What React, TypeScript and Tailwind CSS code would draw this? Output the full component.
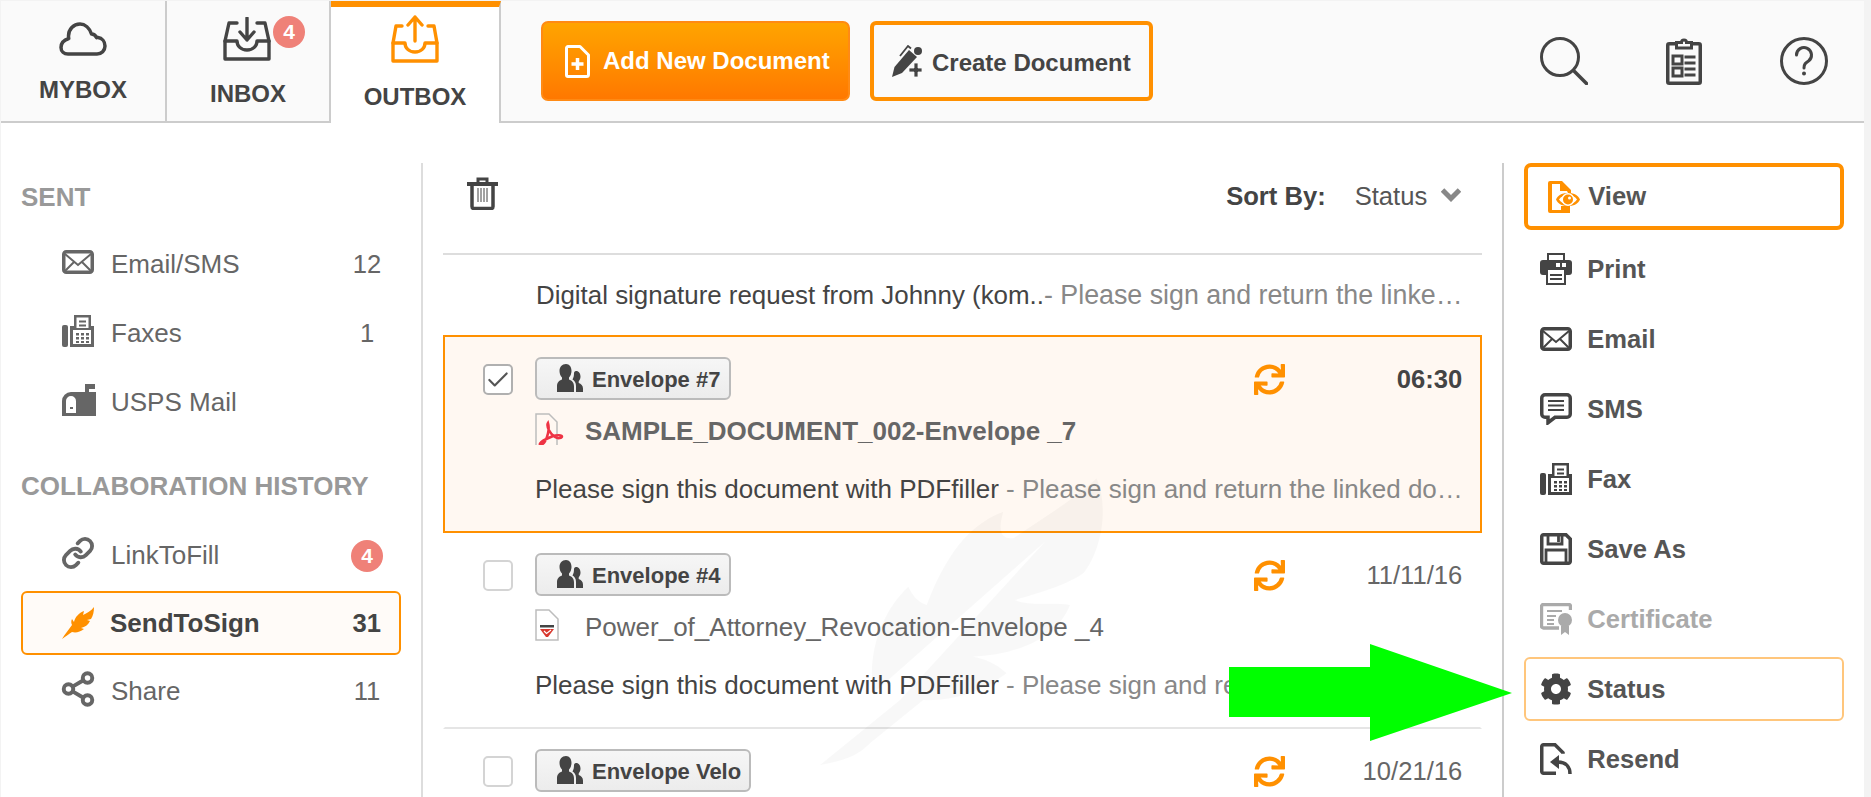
import React from "react";
import { Check, Link, Share2 } from "lucide-react";
import { FaCog, FaSync } from "react-icons/fa";

const DARK = "#444444";
const ORANGE = "#ff9000";

function Cloud() {
  return (
    <svg width="48" height="34" viewBox="0 0 48 34" fill="none" stroke={DARK} strokeWidth="3.5" strokeLinejoin="round">
      <path d="M9 32h29c4.500 0 8-3.500 8-8 0-4.500-3-8-7-8.500-.5 0-1 0-1.500.2-.8-2.200-2.800-3.700-5-3.700C30.500 6 26 2 21 2c-6.500 0-11.500 5.500-11.500 12 0 1 .1 2 .3 2.500C5 18 2 21 2 25.500 2 29.500 5 32 9 32z" />
    </svg>
  );
}

function Tray({ up, color }: { up?: boolean; color: string }) {
  return (
    <svg width="48" height={up ? 48 : 44} viewBox={up ? "0 0 48 48" : "0 0 48 44"} fill="none" stroke={color} strokeWidth="3.400" strokeLinejoin="round" strokeLinecap="round">
      {up ? (
        <g>
          <path d="M2 28h12c0 5 4 9 10 9s10-4 10-9h12v18H2z" />
          <path d="M2 28l3-17h6M46 28l-3-17h-6" />
          <path d="M24 2v24M17 10l7-8 7 8" />
        </g>
      ) : (
        <g>
          <path d="M2 24h12c0 5 4 9 10 9s10-4 10-9h12v18H2z" />
          <path d="M2 24l4-18h8M46 24l-4-18h-8" />
          <path d="M24 1v22M17 15l7 8 7-8" />
        </g>
      )}
    </svg>
  );
}

function SearchIcon() {
  return (
    <svg width="48" height="48" viewBox="0 0 48 48" fill="none" stroke={DARK} strokeLinecap="round">
      <circle cx="20" cy="20" r="18.500" strokeWidth="3" />
      <path d="M33.500 33.500l13 13" strokeWidth="3.500" />
    </svg>
  );
}

function HelpIcon() {
  return (
    <svg width="48" height="48" viewBox="0 0 48 48" fill="none" stroke={DARK}>
      <circle cx="24" cy="24" r="22.500" strokeWidth="3" />
      <path d="M16.500 18a7.500 7.500 0 1 1 12 6c-3 2-4.500 3-4.500 7" strokeWidth="3" strokeLinecap="round" />
      <circle cx="24" cy="36.500" r="2" fill={DARK} stroke="none" />
    </svg>
  );
}

function ClipboardIcon() {
  return (
    <svg width="36" height="48" viewBox="0 0 36 48" fill="none" stroke={DARK}>
      <rect x="1.750" y="6.750" width="32.500" height="39.500" rx="1.500" strokeWidth="3.500" />
      <path d="M10.500 11V5.500h5a2.500 2.500 0 0 1 5 0h5V11z" strokeWidth="3" fill="#fafafa" />
      <rect x="7" y="19" width="9" height="8" strokeWidth="3" />
      <rect x="7" y="31" width="9" height="8" strokeWidth="3" />
      <path d="M18.500 20h11M18.500 26h11M18.500 32h11M18.500 38h11" strokeWidth="3.200" />
    </svg>
  );
}

function AddDocIcon() {
  return (
    <svg width="25" height="33" viewBox="0 0 25 33" fill="none" stroke="#fff" strokeWidth="3" strokeLinejoin="round">
      <path d="M3 1.500h12l8.500 8.500v19.500a2 2 0 0 1-2 2H3a1.500 1.500 0 0 1-1.500-1.500V3A1.500 1.500 0 0 1 3 1.500z" />
      <path d="M12.500 13v12M6.500 19h12" strokeWidth="3.500" />
    </svg>
  );
}

function PenPlusIcon() {
  return (
    <svg width="30" height="32" viewBox="0 0 30 32" fill={DARK}>
      <path d="M0 32l2.500-10L17 5l8 7-15 16z" />
      <path d="M8 11l8-10 3 2.500" fill="none" stroke={DARK} strokeWidth="1.800" />
      <circle cx="26" cy="6" r="4" />
      <path d="M22 18h4v5h4v4h-4v5h-4v-5h-5v-4h5z" stroke="#fafafa" strokeWidth="0.800" />
    </svg>
  );
}

function MailIcon({ color = DARK }: { color?: string }) {
  return (
    <svg width="32" height="24" viewBox="0 0 32 24" fill="none" stroke={color}>
      <rect x="1.750" y="1.750" width="28.500" height="20.500" rx="2.500" strokeWidth="3.500" />
      <path d="M3 4l13 11L29 4M3 21l9.500-9.500M29 21l-9.500-9.500" strokeWidth="2" />
    </svg>
  );
}

function FaxIcon({ color = DARK }: { color?: string }) {
  return (
    <svg width="32" height="32" viewBox="0 0 32 32" fill={color}>
      <rect x="0" y="10" width="6" height="22" rx="2" />
      <path d="M8 11h4V0h17v11h3v21H8zM14.500 2.500V13h12V2.500zM11 15v14h18V15z" fillRule="evenodd" />
      <path d="M17 5.500h7v2h-7zM17 9.500h7v2h-7z" />
      <path d="M14 18h3v2.500h-3zM19 18h3v2.500h-3zM24 18h3v2.500h-3zM14 22h3v2.500h-3zM19 22h3v2.500h-3zM24 22h3v2.500h-3zM14 26h3v2h-3zM19 26h3v2h-3zM24 26h3v2h-3z" />
    </svg>
  );
}

function MailboxIcon() {
  return (
    <svg width="34" height="32" viewBox="0 0 34 32" fill="#666666">
      <path d="M0 32V17a9 9 0 0 1 9-9h14V0h10v5h-6v3h7v24zM4 29h10V17a5 5 0 0 0-10 0z" fillRule="evenodd" />
      <rect x="8" y="23" width="3" height="2" />
    </svg>
  );
}

function FeatherIcon() {
  return (
    <svg width="32" height="32" viewBox="0 0 32 32" fill={ORANGE}>
      <path d="M0 32C3 27 7 22 10 18 9 16 9 14 10 12L12 15C13 10 17 6 22 4L21 8C25 6 29 4 32 0 32 5 31 9 29 12L25 13 28 14C26 18 23 20 19 21L22 22C18 25 14 26 10 25 7 27 4 29 0 32z" />
    </svg>
  );
}

function TrashIcon() {
  return (
    <svg width="31" height="33" viewBox="0 0 31 33" fill="none" stroke={DARK}>
      <path d="M0 7h31" strokeWidth="4" />
      <path d="M11 6V2h9v4" strokeWidth="3" />
      <path d="M5 8v21.500a2 2 0 0 0 2 2h17a2 2 0 0 0 2-2V8" strokeWidth="3.500" />
      <path d="M11 11v14M14 11v14M17 11v14M20 11v14" strokeWidth="1" />
    </svg>
  );
}

function SortChevron() {
  return (
    <svg width="20" height="14" viewBox="0 0 20 14" fill="none" stroke="#888888" strokeWidth="5" className="mt-[11px] ml-[14px]">
      <path d="M1.500 2l8.500 8.500L18.500 2" />
    </svg>
  );
}

function UsersIcon() {
  return (
    <svg width="26" height="29" viewBox="0 0 26 29" fill={DARK}>
      <path d="M9 0c3.500 0 5.500 3 5.500 7 0 2.500-1 5-2.500 6.500v2c3 1 5 3 5 7V28H0v-5.500c0-4 2-6 5-7v-2C3.500 12 2.500 9.500 2.500 7 2.500 3 5 0 9 0z" />
      <path d="M19 7c3 0 4.500 2.500 4.500 5.500 0 2-.7 3.500-1.800 5v1.500c2.300 1 4.300 2.500 4.300 5.500V28h-7v-6c0-3-1.500-5.500-3.500-6.500 1-2 1.500-3.500 1.500-6.500 0-.7.700-2 2-2z" />
    </svg>
  );
}

function PdfIcon() {
  return (
    <svg width="29" height="32" viewBox="0 0 29 32" fill="none">
      <path d="M1 32V1h13l8 8v23" stroke="#bdbdbd" strokeWidth="1.500" />
      <path d="M13 10c-2 3 2 11 7 14 3 2 7 1 7-.5s-5-2-10 0-11 5-12 7 3 1.500 5-2 5-12 3-18.500z" stroke="#ee3344" strokeWidth="2.500" />
    </svg>
  );
}

function SignDocIcon() {
  return (
    <svg width="24" height="32" viewBox="0 0 24 32" fill="none">
      <path d="M1 31V1h13l9 9v21z" stroke="#bdbdbd" strokeWidth="1.500" fill="#fff" />
      <path d="M5 16h14v2.500H5z" fill="#444" />
      <path d="M5 20h14l-6 8h-2z" fill="#d8382e" />
      <path d="M9 22l2.500 2.500L16 21" stroke="#fff" strokeWidth="1.200" />
    </svg>
  );
}

function ViewIcon() {
  return (
    <svg width="32" height="32" viewBox="0 0 32 32" fill={ORANGE}>
      <path d="M2 0h12l9 9v3h-3l-1-2h-7V3H4v26h9v3H2a2 2 0 0 1-2-2V2a2 2 0 0 1 2-2z" />
      <path d="M8 18.500c2-4 5-6.500 12-6.500s10 2.500 12 6.500c-2 4-5 6.500-12 6.500S10 22.500 8 18.500zM11 18.500c2 3 5 4.500 9 4.500s7-1.500 9-4.500c-2-3-5-4.500-9-4.500s-7 1.500-9 4.500z" fillRule="evenodd" />
      <path d="M13 25h9v7h-9z" />
      <circle cx="20" cy="18.500" r="6.500" fill="#fff" />
      <circle cx="20" cy="18.500" r="5" />
      <circle cx="21.500" cy="17" r="1.500" fill="#fff" />
    </svg>
  );
}

function PrintIcon() {
  return (
    <svg width="32" height="32" viewBox="0 0 32 32" fill={DARK}>
      <path d="M7 0h18v9h-2V2H9v7H7z" />
      <rect x="0" y="7" width="32" height="15" rx="3" />
      <rect x="16" y="10" width="4" height="4" fill="#fff" />
      <rect x="22" y="10" width="4" height="4" fill="#fff" />
      <rect x="7" y="16" width="18" height="15" fill="#fff" stroke={DARK} strokeWidth="2" />
      <path d="M10 21h12v2H10zM10 25h12v2H10z" />
    </svg>
  );
}

function SmsIcon() {
  return (
    <svg width="32" height="32" viewBox="0 0 32 32" fill="none" stroke={DARK}>
      <path d="M5 1.750h22a3.250 3.250 0 0 1 3.250 3.250v16a3.250 3.250 0 0 1-3.250 3.250H15l-7 5.500v-5.500H5A3.250 3.250 0 0 1 1.750 21V5A3.250 3.250 0 0 1 5 1.750z" strokeWidth="3.500" />
      <path d="M8 8h16M8 12.500h16M8 17h16" strokeWidth="2.200" />
    </svg>
  );
}

function SaveIcon() {
  return (
    <svg width="32" height="32" viewBox="0 0 32 32" fill="none" stroke={DARK} strokeWidth="3.500">
      <path d="M3.500 1.750H26l4.250 4.250v22.500a1.750 1.750 0 0 1-1.750 1.750H3.500a1.750 1.750 0 0 1-1.750-1.750v-25a1.750 1.750 0 0 1 1.750-1.750z" />
      <path d="M8 2v9h14V2M18.500 3v6" strokeWidth="2.800" />
      <path d="M6 30V17h20v13" strokeWidth="2.800" />
    </svg>
  );
}

function CertIcon() {
  return (
    <svg width="32" height="32" viewBox="0 0 32 32" fill="none" stroke="#aaaaaa">
      <path d="M19 25H3.500a2 2 0 0 1-2-2V3.500a2 2 0 0 1 2-2h25a2 2 0 0 1 2 2V7" strokeWidth="3.400" />
      <path d="M7 8h15M7 13h9M7 17h7M7 21h7" strokeWidth="2.200" />
      <circle cx="25" cy="17" r="7" fill="#aaaaaa" stroke="none" />
      <path d="M21 23v9l4-3 4 3v-9z" fill="#aaaaaa" stroke="none" />
    </svg>
  );
}

function ResendIcon() {
  return (
    <svg width="32" height="32" viewBox="0 0 32 32" fill="none" stroke={DARK} strokeWidth="3.500">
      <path d="M16 30.250H3.500a1.750 1.750 0 0 1-1.750-1.750V3.500A1.750 1.750 0 0 1 3.500 1.750H15l8 8v1" />
      <path d="M30 31c0-7-4-12-12-12h-1" />
      <path d="M10 19l9-7v14z" fill={DARK} stroke="none" />
    </svg>
  );
}

function Tab({ label, icon, className, textClass }: { label: string; icon: React.ReactNode; className: string; textClass: string }) {
  return (
    <div className={`relative flex flex-col items-center ${className}`}>
      {icon}
      <span className={`text-[24px] leading-[28px] font-bold text-[#444] ${textClass}`}>{label}</span>
    </div>
  );
}

function SideRow({ icon, label, count }: { icon: React.ReactNode; label: string; count?: string }) {
  return (
    <div className="flex h-[69px] items-center pt-[2px] pr-[13px] pl-[61px] text-[#666]">
      <span className="flex w-[49px] -translate-y-[3px]">{icon}</span>
      <span className="flex-1 text-[26px]">{label}</span>
      {count && <span className="w-[40px] text-center text-[25.6px]">{count}</span>}
    </div>
  );
}

function Envelope({ name, width }: { name: string; width: string }) {
  return (
    <div className={`flex h-[43px] items-center rounded-[6px] border-2 border-[#bbb] bg-gradient-to-b from-[#f6f6f6] to-[#ececec] pl-[20px] text-[22px] font-bold text-[#444] ${width}`}>
      <UsersIcon />
      <span className="ml-[9px] translate-y-px">{name}</span>
    </div>
  );
}

function DocRow({ selected, checked, tag, tagWidth, date, docIcon, doc, message, preview, className }: {
  selected?: boolean;
  checked?: boolean;
  tag: string;
  tagWidth: string;
  date: string;
  docIcon?: React.ReactNode;
  doc?: string;
  message?: string;
  preview?: string;
  className: string;
}) {
  return (
    <div className={`flex border-x-2 pt-[20px] pl-[38px] ${selected ? "border-y-2 border-[#ff9000] bg-[#fff8f2]" : "border-x-transparent"} ${className}`}>
      <div className={`mt-[7px] flex h-[31px] w-[30px] items-center justify-center rounded-[5px] border-2 bg-white ${checked ? "border-[#b0b0b0]" : "border-[#d4d4d4]"}`}>
        {checked && <Check size={28} strokeWidth={2} color="#555" />}
      </div>
      <div className="ml-[22px] flex-1">
        <div className="flex h-[43px] items-center pr-[18px]">
          <Envelope name={tag} width={tagWidth} />
          <FaSync size={31} color={ORANGE} className="mt-[2px] ml-auto" />
          <span className={`mt-[2px] w-[177px] text-right text-[25.6px] ${selected ? "font-bold text-[#444]" : "text-[#666]"}`}>{date}</span>
        </div>
        {doc && (
          <div className="mt-[11px] flex h-[40px] items-center">
            <span className="flex w-[50px] -translate-y-[2px]">{docIcon}</span>
            <span className={`text-[26px] text-[#666] ${selected ? "font-bold" : ""}`}>{doc}</span>
          </div>
        )}
        {message && (
          <div className="mt-[18px] flex h-[40px] items-center whitespace-nowrap text-[26px] text-[#444]">
            {message}
            <span className="text-[#888]">&nbsp;- {preview}</span>
          </div>
        )}
      </div>
    </div>
  );
}

function ActionRow({ icon, label, className = "border-transparent", color = "text-[#555]" }: { icon: React.ReactNode; label: string; className?: string; color?: string }) {
  return (
    <div className={`mt-[6px] flex h-[64px] items-center gap-[15px] rounded-[6px] border-2 pl-[14px] text-[25.6px] font-bold ${color} ${className}`}>
      {icon}
      <span>{label}</span>
    </div>
  );
}

export default function App() {
  return (
    <div className="relative h-[797px] w-[1871px] overflow-hidden bg-[#f3f3f3] pt-px pr-[7px] pl-px font-['Liberation_Sans',sans-serif]">
      {/* top bar */}
      <header className="flex h-[122px] items-start border-b-[2px] border-[#ccc] bg-[#fafafa]">
        <Tab label="MYBOX" icon={<Cloud />} className="h-[120px] w-[166px] border-r-2 border-[#ccc] pt-[21px]" textClass="mt-[20px]" />
        <Tab
          label="INBOX"
          icon={
            <div className="relative -translate-x-px">
              <Tray color={DARK} />
              <span className="absolute -top-px -right-[34px] flex h-[32px] w-[32px] items-center justify-center rounded-full bg-[#ef8178] text-[21px] font-bold text-white">4</span>
            </div>
          }
          className="h-[120px] w-[164px] border-r-2 border-[#ccc] pt-[16px]"
          textClass="mt-[19px]"
        />
        <Tab label="OUTBOX" icon={<Tray up color={ORANGE} />} className="z-10 h-[122px] w-[170px] border-t-[6px] border-r-2 border-t-[#ff9000] border-r-[#ccc] bg-white pt-[8px]" textClass="mt-[20px]" />
        <button className="mt-[20px] ml-[40px] flex h-[80px] w-[309px] items-center rounded-[7px] border-2 border-[#ff8a14] bg-gradient-to-b from-[#ffa400] to-[#ff7800] pl-[22px] text-[24px] font-bold text-white">
          <AddDocIcon />
          <span className="ml-[13px]">Add New Document</span>
        </button>
        <button className="mt-[20px] ml-[20px] flex h-[80px] w-[283px] items-center rounded-[6px] border-4 border-[#ff9000] pl-[18px] text-[24px] font-bold text-[#444]">
          <PenPlusIcon />
          <span className="ml-[10px] translate-y-[2px]">Create Document</span>
        </button>
        <div className="mt-[36px] mr-[36px] ml-auto flex items-start gap-[78px]">
          <SearchIcon />
          <ClipboardIcon />
          <HelpIcon />
        </div>
      </header>

      <main className="flex h-[674px] bg-white pt-[40px]">
        {/* left nav */}
        <aside className="w-[422px] border-r-2 border-[#ddd] pr-[21px]">
          <h3 className="flex h-[66px] items-center pt-[2px] pl-[20px] text-[26px] font-bold text-[#999]">SENT</h3>
          <SideRow icon={<MailIcon color="#666666" />} label="Email/SMS" count="12" />
          <SideRow icon={<FaxIcon color="#666666" />} label="Faxes" count="1" />
          <SideRow icon={<MailboxIcon />} label="USPS Mail" />
          <h3 className="mt-[16px] flex h-[68px] items-center pl-[20px] text-[26px] font-bold text-[#999]">COLLABORATION HISTORY</h3>
          <div className="flex h-[69px] items-center pt-[2px] pr-[17px] pl-[61px] text-[26px] text-[#666]">
            <span className="flex w-[49px] -translate-y-[3px]"><Link size={34} strokeWidth={2.7} className="-ml-px" color="#666666" /></span>
            <span className="flex-1">LinkToFill</span>
            <span className="flex h-[32px] w-[32px] items-center justify-center rounded-full bg-[#ef8178] text-[21px] font-bold text-white">4</span>
          </div>
          <div className="mt-[2px] ml-[20px] flex h-[64px] w-[380px] items-center rounded-[6px] border-2 border-[#ff9000] bg-[#fffbf8] pr-[18px] pl-[39px] text-[25.6px] font-bold text-[#444]">
            <FeatherIcon />
            <span className="ml-[16px] flex-1 text-[26px]">SendToSign</span>
            <span>31</span>
          </div>
          <div className="mt-[1px]">
            <SideRow icon={<Share2 size={38} strokeWidth={2.5} className="-ml-[3px]" color="#666666" />} label="Share" count="11" />
          </div>
        </aside>

        {/* document list */}
        <section className="relative w-[1080px] px-[20px]">
          <div className="flex h-[92px] items-start border-b-2 border-[#ddd] pt-[14px] pr-[21px] pl-[24px] text-[25.6px]">
            <TrashIcon />
            <span className="ml-auto font-bold text-[#444]">Sort By:</span>
            <span className="ml-[29px] text-[#555]">Status</span>
            <SortChevron />
          </div>
          <div className="flex h-[80px] items-center pl-[93px] whitespace-nowrap text-[25.9px] text-[#444]">
            Digital signature request from Johnny (kom..
            <span className="text-[26.8px] text-[#888]">- Please sign and return the linke…</span>
          </div>
          <DocRow
            selected
            checked
            tag="Envelope #7"
            tagWidth="w-[196px]"
            date="06:30"
            docIcon={<PdfIcon />}
            doc="SAMPLE_DOCUMENT_002-Envelope _7"
            message="Please sign this document with PDFfiller"
            preview="Please sign and return the linked do…"
            className="h-[198px]"
          />
          <DocRow
            tag="Envelope #4"
            tagWidth="w-[196px]"
            date="11/11/16"
            docIcon={<SignDocIcon />}
            doc="Power_of_Attorney_Revocation-Envelope _4"
            message="Please sign this document with PDFfiller"
            preview="Please sign and return the linked do…"
            className="h-[196px] border-b-2 border-b-[#e5e5e5]"
          />
          <DocRow tag="Envelope Velo" tagWidth="w-[216px]" date="10/21/16" className="h-[60px]" />
          {/* feather watermark */}
          <svg viewBox="0 0 1140 960" className="pointer-events-none absolute top-[297px] left-[377px] h-[320px] w-[380px]" fill="#000" fillOpacity="0.028">
            <path d="M60 915C150 900 180 880 210 850L370 720C450 725 540 700 620 640 590 610 550 595 520 590 640 585 770 540 810 435 760 425 690 440 645 420 720 400 810 370 850 340 900 280 930 150 890 55 820 120 720 180 640 235 610 235 590 225 610 155 530 185 450 250 380 435 350 425 335 400 325 380 250 450 200 570 220 700L735 245 300 720z" />
          </svg>
        </section>

        {/* actions */}
        <aside className="w-[362px] border-l-2 border-[#ccc] px-[20px]">
          <div className="flex h-[67px] items-center gap-[8px] rounded-[7px] border-4 border-[#ff9000] pl-[20px] text-[25.6px] font-bold text-[#555]">
            <ViewIcon />
            <span>View</span>
          </div>
          <ActionRow icon={<PrintIcon />} label="Print" className="mt-[7px] border-transparent" />
          <ActionRow icon={<MailIcon />} label="Email" />
          <ActionRow icon={<SmsIcon />} label="SMS" />
          <ActionRow icon={<FaxIcon />} label="Fax" />
          <ActionRow icon={<SaveIcon />} label="Save As" />
          <ActionRow icon={<CertIcon />} label="Certificate" color="text-[#aaa]" />
          <ActionRow icon={<FaCog size={32} color={DARK} />} label="Status" className="border-[#ffc67c]" />
          <ActionRow icon={<ResendIcon />} label="Resend" />
        </aside>
      </main>

      {/* green annotation arrow */}
      <svg width="283" height="98" viewBox="0 0 283 98" className="absolute top-[644px] left-[1229px]">
        <path d="M0 23h141V0l142 49-142 48V73H0z" fill="#00ff00" />
      </svg>
    </div>
  );
}
